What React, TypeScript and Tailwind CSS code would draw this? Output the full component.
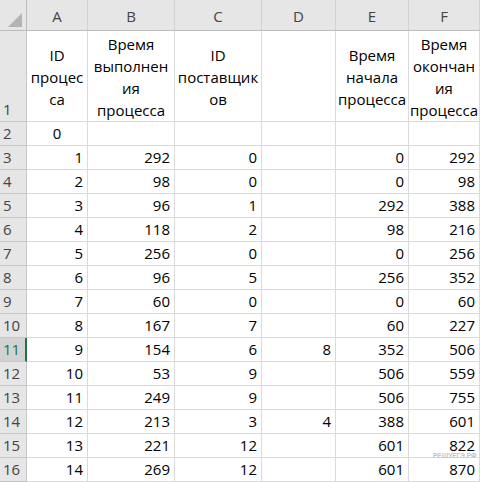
const cols = ["A", "B", "C", "D", "E", "F"];

const headers: string[][] = [
  ["ID", "процес", "са"],
  ["Время", "выполнен", "ия", "процесса"],
  ["ID", "поставщик", "ов"],
  [],
  ["Время", "начала", "процесса"],
  ["Время", "окончан", "ия", "процесса"],
];

const rows: (number | string)[][] = [
  [1, 292, 0, "", 0, 292],
  [2, 98, 0, "", 0, 98],
  [3, 96, 1, "", 292, 388],
  [4, 118, 2, "", 98, 216],
  [5, 256, 0, "", 0, 256],
  [6, 96, 5, "", 256, 352],
  [7, 60, 0, "", 0, 60],
  [8, 167, 7, "", 60, 227],
  [9, 154, 6, 8, 352, 506],
  [10, 53, 9, "", 506, 559],
  [11, 249, 9, "", 506, 755],
  [12, 213, 3, 4, 388, 601],
  [13, 221, 12, "", 601, 822],
  [14, 269, 12, "", 601, 870],
];

const cell = "border-r border-b border-[#dadada] bg-white";
const rowHead =
  "border-r border-b border-[#c6c6c6] bg-[#e6e6e6] text-[#444] flex items-end pl-[3px] pb-[1px]";

export default function App() {
  return (
    <div
      className="relative w-[480px] h-[482px] overflow-hidden bg-white text-[15px] text-black"
      style={{ fontFamily: '"Open Sans", sans-serif' }}
    >
      <div className="grid grid-cols-[27px_61px_87px_87px_74px_73px_71px] grid-rows-[31px_91px_repeat(15,24px)]">
        {/* corner */}
        <div className="relative border-r border-b border-[#bcbcbc] bg-[#e6e6e6]">
          <div className="absolute left-[8px] top-[13px] w-0 h-0 border-l-[14px] border-l-transparent border-b-[14px] border-b-[#b4b4b4]" />
        </div>
        {cols.map((c) => (
          <div
            key={c}
            className="border-r border-b border-r-[#d2d2d2] border-b-[#bcbcbc] bg-[#e6e6e6] text-[#444] flex items-center justify-center pt-[2px]"
          >
            {c}
          </div>
        ))}

        {/* row 1 */}
        <div className={rowHead}>1</div>
        {headers.map((lines, i) => (
          <div
            key={i}
            className={`${cell} flex flex-col items-center justify-center leading-[22px] whitespace-nowrap pt-[1px]`}
          >
            {lines.map((l, j) => (
              <span key={j}>{l}</span>
            ))}
          </div>
        ))}

        {/* row 2 */}
        <div className={rowHead}>2</div>
        <div className={`${cell} flex items-center justify-center`}>0</div>
        {[0, 1, 2, 3, 4].map((i) => (
          <div key={i} className={cell} />
        ))}

        {rows.map((r, i) => {
          const n = i + 3;
          const selected = n === 11;
          return [
            <div
              key={`h${n}`}
              className={
                selected
                  ? "border-b border-[#c6c6c6] border-r-2 border-r-[#217346] bg-[#d2d2d2] text-[#217346] flex items-end pl-[3px] pb-[1px]"
                  : rowHead
              }
            >
              {n}
            </div>,
            ...r.map((v, j) => (
              <div
                key={`${n}-${j}`}
                className={`${cell} flex items-center justify-end pr-[4px]`}
              >
                {v}
              </div>
            )),
          ];
        })}
      </div>

      <div
        className="absolute left-[433px] top-[453px] text-[6.5px] font-bold text-[#c4c4c4] leading-none"
        style={{ fontFamily: '"Liberation Sans", sans-serif' }}
      >
        РЕШУЕГЭ.РФ
      </div>
    </div>
  );
}
